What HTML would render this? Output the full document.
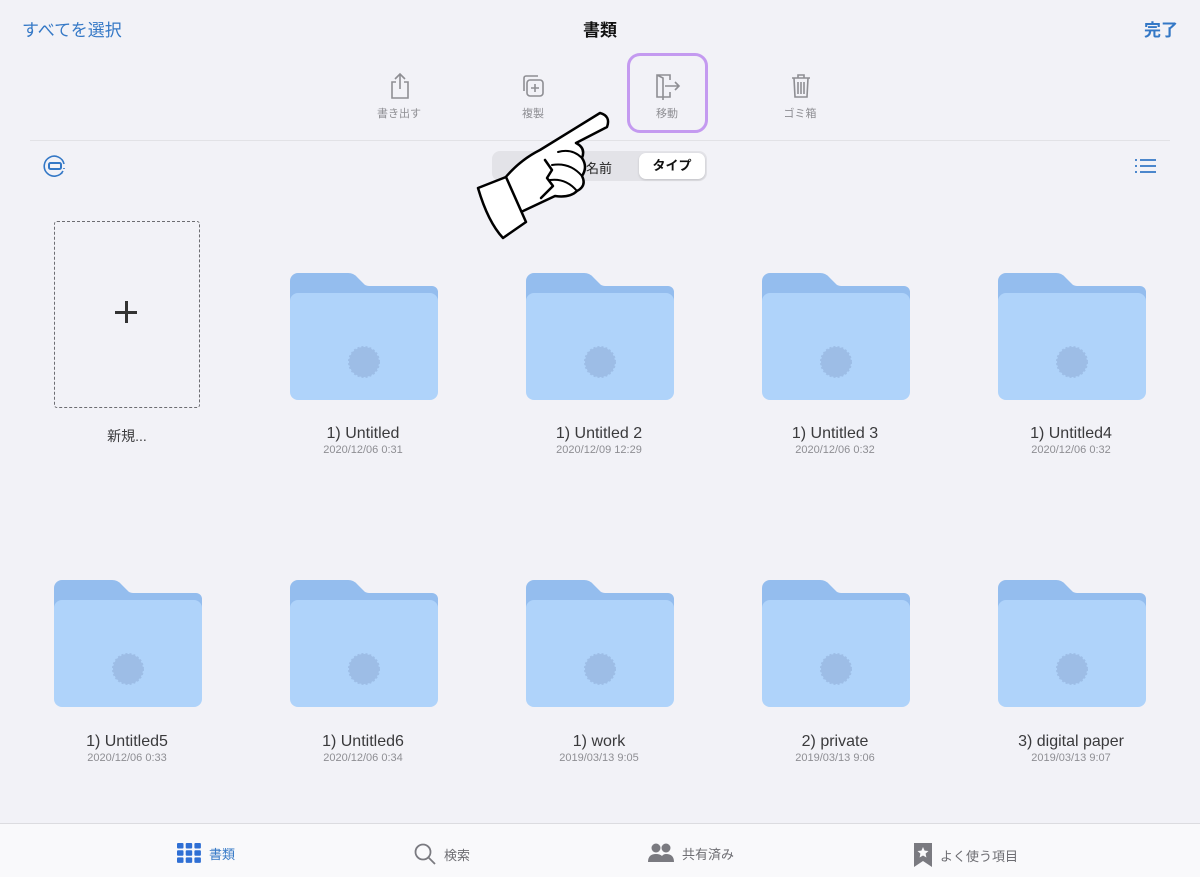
<!DOCTYPE html>
<html><head><meta charset="utf-8"><style>
*{margin:0;padding:0;box-sizing:border-box}
body{width:1200px;height:877px;background:#f2f2f7;font-family:"Liberation Sans","Noto Sans CJK JP",sans-serif;position:relative;overflow:hidden;color:#333}
.a{position:absolute}
.blue{color:#3478c6}
.tl{font-size:11px;color:#8e8e93;text-align:center;width:100px}
.fold{position:absolute;width:148px;height:127px}
.name{position:absolute;width:220px;text-align:center;font-size:16px;color:#3a3a3c}
.date{position:absolute;width:220px;text-align:center;font-size:11px;color:#8e8e93}
.tab{position:absolute;top:843px;font-size:13px;color:#6d6d72;display:flex;align-items:center;gap:8px}
</style></head><body>
<div class="a blue" style="left:22px;top:16px;font-size:17px">すべてを選択</div>
<div class="a" style="left:0;width:1200px;top:16px;text-align:center;font-size:17px;font-weight:bold;color:#111">書類</div>
<div class="a blue" style="right:22px;top:16px;font-size:17px;font-weight:bold">完了</div>

<svg class="a" style="left:389px;top:72px" width="22" height="28" viewBox="0 0 22 28" fill="none" stroke="#8e8e93" stroke-width="1.6"><path d="M7 10H3v16h16V10h-4M11 2v15M6 7l5-5 5 5"/></svg>
<div class="a tl" style="left:349px;top:105px">書き出す</div>
<svg class="a" style="left:520px;top:73px" width="26" height="26" viewBox="0 0 26 26" fill="none" stroke="#8e8e93" stroke-width="1.6"><rect x="7" y="7" width="16" height="16" rx="3"/><path d="M4 18V5a2 2 0 0 1 2-2h12M15 11v8M11 15h8"/></svg>
<div class="a tl" style="left:483px;top:105px">複製</div>
<svg class="a" style="left:654px;top:72px" width="28" height="28" viewBox="0 0 28 28" fill="none" stroke="#8e8e93" stroke-width="1.6"><path d="M16 8V3H3v22h13v-5M3 3l6 3v22"/><path d="M11 14h14M21 10l4 4-4 4"/></svg>
<div class="a tl" style="left:617px;top:105px">移動</div>
<svg class="a" style="left:790px;top:73px" width="22" height="26" viewBox="0 0 22 26" fill="none" stroke="#8e8e93" stroke-width="1.6"><path d="M2 5h18M8 5V2h6v3M4 5l1 19h12l1-19M8 9v12M11 9v12M14 9v12"/></svg>
<div class="a tl" style="left:750px;top:105px">ゴミ箱</div>
<div class="a" style="left:627px;top:53px;width:81px;height:80px;border:3px solid #c49af0;border-radius:13px"></div>
<div class="a" style="left:30px;top:140px;width:1140px;height:1px;background:#e2e2e6"></div>

<svg class="a" style="left:43px;top:154px" width="24" height="24" viewBox="0 0 24 24" fill="none" stroke="#3478c6" stroke-width="1.6"><path d="M20 17A10 10 0 1 1 21 10"/><path d="M21 14v1M19 19l-1 1" stroke-dasharray="1 2"/><rect x="6" y="9" width="12" height="6" rx="1.5" stroke-width="2"/></svg>
<div class="a" style="left:492px;top:151px;width:215px;height:30px;background:#e3e3e8;border-radius:8px"></div>
<div class="a" style="left:586px;top:158px;font-size:13px;color:#222">名前</div>
<div class="a" style="left:639px;top:153px;width:66px;height:26px;background:#fff;border-radius:7px;box-shadow:0 1px 2px rgba(0,0,0,.15);text-align:center;font-size:13px;font-weight:bold;line-height:26px;color:#111">タイプ</div>
<svg class="a" style="left:1134px;top:157px" width="22" height="18" viewBox="0 0 22 18" stroke="#3478c6" stroke-width="1.8"><path d="M6 3h16M6 9h16M6 15h16M1 3h2M1 9h2M1 15h2"/></svg>

<div class="a" style="left:54px;top:221px;width:146px;height:187px;border:1.5px dashed #6d6d72;border-radius:3px"></div>
<div class="a" style="left:113px;top:299px;width:26px;height:26px">
<div class="a" style="left:12px;top:2px;width:2.5px;height:22px;background:#333"></div>
<div class="a" style="left:2px;top:12px;width:22px;height:2.5px;background:#333"></div></div>
<div class="name" style="left:17px;top:426px;font-size:14px">新規...</div>

<svg width="0" height="0" style="position:absolute"><defs><g id="f">
<path d="M0 8a8 8 0 0 1 8-8h50a12 12 0 0 1 9 4l6 6a8 8 0 0 0 6 3h63a6 6 0 0 1 6 6v10H0z" fill="#94bdee"/>
<rect x="0" y="20" width="148" height="107" rx="8" fill="#afd3fa"/>
<circle cx="74" cy="89" r="15" fill="#9dbde6" stroke="#9dbde6" stroke-width="2" stroke-dasharray="2 2"/>
</g></defs></svg>

<svg class="fold" style="left:290px;top:273px" viewBox="0 0 148 127"><use href="#f"/></svg>
<svg class="fold" style="left:526px;top:273px" viewBox="0 0 148 127"><use href="#f"/></svg>
<svg class="fold" style="left:762px;top:273px" viewBox="0 0 148 127"><use href="#f"/></svg>
<svg class="fold" style="left:998px;top:273px" viewBox="0 0 148 127"><use href="#f"/></svg>
<div class="name" style="left:253px;top:425px">1) Untitled</div><div class="date" style="left:253px;top:444px">2020/12/06 0:31</div>
<div class="name" style="left:489px;top:425px">1) Untitled 2</div><div class="date" style="left:489px;top:444px">2020/12/09 12:29</div>
<div class="name" style="left:725px;top:425px">1) Untitled 3</div><div class="date" style="left:725px;top:444px">2020/12/06 0:32</div>
<div class="name" style="left:961px;top:425px">1) Untitled4</div><div class="date" style="left:961px;top:444px">2020/12/06 0:32</div>

<svg class="fold" style="left:54px;top:580px" viewBox="0 0 148 127"><use href="#f"/></svg>
<svg class="fold" style="left:290px;top:580px" viewBox="0 0 148 127"><use href="#f"/></svg>
<svg class="fold" style="left:526px;top:580px" viewBox="0 0 148 127"><use href="#f"/></svg>
<svg class="fold" style="left:762px;top:580px" viewBox="0 0 148 127"><use href="#f"/></svg>
<svg class="fold" style="left:998px;top:580px" viewBox="0 0 148 127"><use href="#f"/></svg>
<div class="name" style="left:17px;top:733px">1) Untitled5</div><div class="date" style="left:17px;top:752px">2020/12/06 0:33</div>
<div class="name" style="left:253px;top:733px">1) Untitled6</div><div class="date" style="left:253px;top:752px">2020/12/06 0:34</div>
<div class="name" style="left:489px;top:733px">1) work</div><div class="date" style="left:489px;top:752px">2019/03/13 9:05</div>
<div class="name" style="left:725px;top:733px">2) private</div><div class="date" style="left:725px;top:752px">2019/03/13 9:06</div>
<div class="name" style="left:961px;top:733px">3) digital paper</div><div class="date" style="left:961px;top:752px">2019/03/13 9:07</div>

<svg class="a" style="left:0;top:0" width="1200" height="300" fill="#fff" stroke="#000" stroke-width="2.5" stroke-linejoin="round" stroke-linecap="round">
<path d="M600 113Q611 116 607 127L576 143Q586 148 582 158Q588 167 582 176Q587 186 577 191Q570 198 555 196L521 212L505 178Q520 160 540 150Z"/>
<path d="M478 188L506 177L526 222L503 238Q488 222 478 188Z"/>
<path d="M558 152Q572 148 582 158M552 165Q570 162 582 176M550 180Q566 178 577 191" fill="none" stroke-width="2"/>
<path d="M545 160l7 10-5 8 6 8-12 12" fill="none" stroke-width="2.5"/>
</svg>

<div class="a" style="left:0;top:823px;width:1200px;height:54px;background:#f9f9fb;border-top:1px solid #dcdce0"></div>
<div class="tab" style="left:177px;color:#3478c6">
<svg width="24" height="20" viewBox="0 0 24 20" fill="#2f6fd4"><rect x="0" y="0" width="6.5" height="5.5" rx="1"/><rect x="8.7" y="0" width="6.5" height="5.5" rx="1"/><rect x="17.4" y="0" width="6.5" height="5.5" rx="1"/><rect x="0" y="7.2" width="6.5" height="5.5" rx="1"/><rect x="8.7" y="7.2" width="6.5" height="5.5" rx="1"/><rect x="17.4" y="7.2" width="6.5" height="5.5" rx="1"/><rect x="0" y="14.4" width="6.5" height="5.5" rx="1"/><rect x="8.7" y="14.4" width="6.5" height="5.5" rx="1"/><rect x="17.4" y="14.4" width="6.5" height="5.5" rx="1"/></svg>書類</div>
<div class="tab" style="left:414px"><svg width="22" height="22" viewBox="0 0 22 22" fill="none" stroke="#7a7a80" stroke-width="1.8"><circle cx="9" cy="9" r="7.5"/><path d="M14.5 14.5L21 21"/></svg>検索</div>
<div class="tab" style="left:648px"><svg width="26" height="20" viewBox="0 0 26 20" fill="#7a7a80"><circle cx="8" cy="5" r="4.5"/><circle cx="18" cy="5" r="4.5"/><path d="M0 19q0-8 8-8t8 8zM12 19q1-8 6-8 8 0 8 8z"/></svg>共有済み</div>
<div class="tab" style="left:914px"><svg width="18" height="24" viewBox="0 0 18 24" fill="#7a7a80"><path d="M0 0h18v24l-9-6-9 6z"/><path d="M9 4l1.6 3.6 3.9.4-2.9 2.6.8 3.9L9 12.5 5.6 14.5l.8-3.9L3.5 8l3.9-.4z" fill="#f9f9fb"/></svg>よく使う項目</div>
</body></html>
